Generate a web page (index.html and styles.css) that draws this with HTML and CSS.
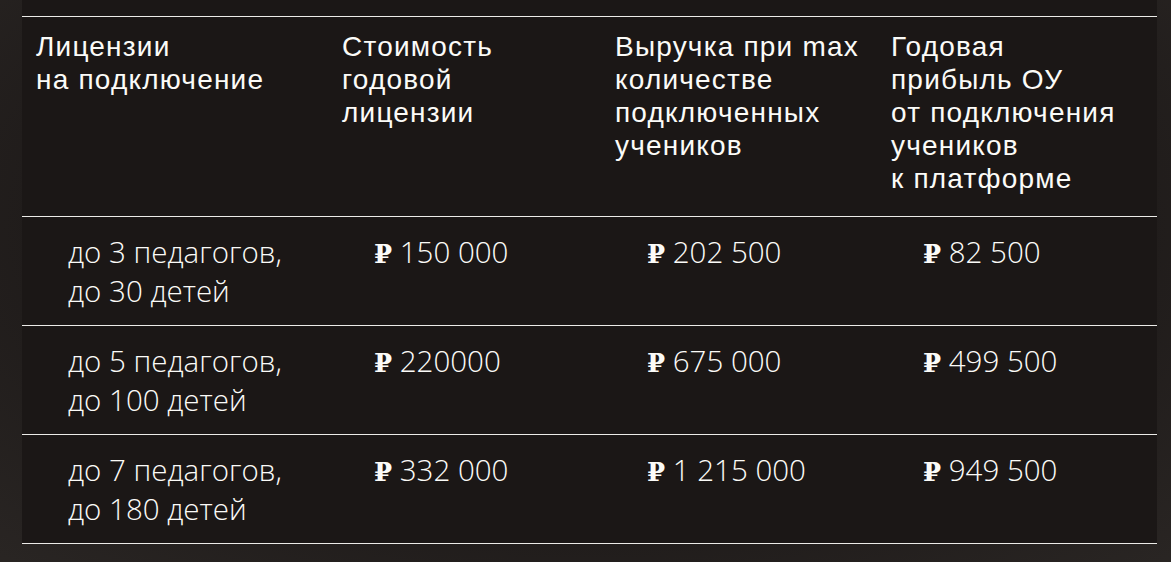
FILE: index.html
```html
<!DOCTYPE html>
<html lang="ru">
<head>
<meta charset="utf-8">
<title>Лицензии</title>
<link rel="stylesheet" href="styles.css">
</head>
<body>
<div class="page">
  <div class="table">
    <div class="row head">
      <div class="cell">Лицензии<br>на подключение</div>
      <div class="cell">Стоимость<br>годовой<br>лицензии</div>
      <div class="cell">Выручка при max<br>количестве<br>подключенных<br>учеников</div>
      <div class="cell">Годовая<br>прибыль ОУ<br>от подключения<br>учеников<br>к платформе</div>
    </div>
    <div class="row body">
      <div class="cell">до 3 педагогов,<br>до 30 детей</div>
      <div class="cell"><span class="rub">₽</span> 150 000</div>
      <div class="cell"><span class="rub">₽</span> 202 500</div>
      <div class="cell"><span class="rub">₽</span> 82 500</div>
    </div>
    <div class="row body">
      <div class="cell">до 5 педагогов,<br>до 100 детей</div>
      <div class="cell"><span class="rub">₽</span> 220000</div>
      <div class="cell"><span class="rub">₽</span> 675 000</div>
      <div class="cell"><span class="rub">₽</span> 499 500</div>
    </div>
    <div class="row body">
      <div class="cell">до 7 педагогов,<br>до 180 детей</div>
      <div class="cell"><span class="rub">₽</span> 332 000</div>
      <div class="cell"><span class="rub">₽</span> 1 215 000</div>
      <div class="cell"><span class="rub">₽</span> 949 500</div>
    </div>
  </div>
</div>
</body>
</html>
```
FILE: styles.css
```css
html, body {
  margin: 0;
  padding: 0;
  height: 100%;
}
body {
  background: radial-gradient(ellipse 75% 85% at 50% 40%, #1e1a19 55%, #2a2624 100%);
  color: #fbfbf8;
  overflow: hidden;
}
.page {
  padding: 0 14px 0 22px;
}
.table {
  width: 1135px;
  background: #1b1716;
  padding-top: 16px;
}
.row {
  display: grid;
  grid-template-columns: 306px 273px 276px 280px;
  border-top: 1px solid #ecebe8;
}
.row:last-child {
  border-bottom: 1px solid #ecebe8;
}
.head .cell {
  font-family: "Liberation Sans", Arial, sans-serif;
  font-size: 28px;
  letter-spacing: 1.2px;
  line-height: 33px;
  padding: 13px 0 21px 14px;
}
.body .cell {
  font-family: "Open Sans", sans-serif;
  font-size: 29.5px;
  font-weight: 300;
  line-height: 39px;
  padding: 15px 0 15px 46px;
  height: 78px;
}
.rub {
  font-family: "DejaVu Serif", serif;
  font-weight: bold;
  font-size: 26px;
}
```
